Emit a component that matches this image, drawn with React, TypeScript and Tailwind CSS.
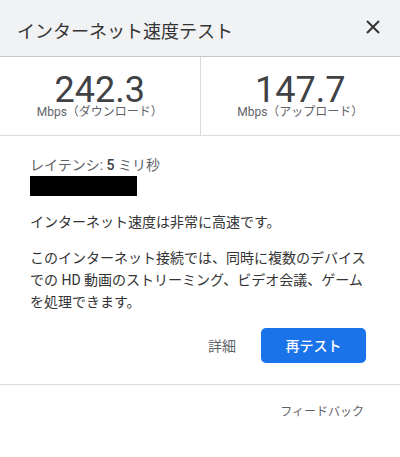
import React from "react";

const stats = [
  { value: "242.3", label: "Mbps（ダウンロード）" },
  { value: "147.7", label: "Mbps（アップロード）" },
];

const SpeedTestDialog = () => {
  return (
    <div className="w-[400px] h-[457px] bg-white font-['Roboto','Noto_Sans_CJK_JP',sans-serif] text-[#3c4043]">
      {/* HEADER */}
      <div className="h-[57px] bg-[#f1f2f4] border-b border-[#c6c7cc] flex items-center justify-between pl-[17px] pr-[20px]">
        <h1 className="pt-[8px] text-[18px] leading-[24px] text-[#333]">
          インターネット速度テスト
        </h1>
        <button className="w-[14px] h-[14px] -mt-[2px]">
          <svg width="14" height="14" viewBox="0 0 14 14">
            <path d="M1 1L13 13M13 1L1 13" stroke="#333" strokeWidth="2" />
          </svg>
        </button>
      </div>

      {/* STATS */}
      <div className="h-[79px] border-b border-[#dadce0] flex">
        {stats.map((s, i) => (
          <div
            key={i}
            className={`flex-1 flex flex-col items-center pt-[18px] ${i === 0 ? "border-r border-[#dadce0]" : ""}`}
          >
            <p className="text-[36px] leading-[30px] text-[#404246]">{s.value}</p>
            <p className="text-[12px] leading-[14px] text-[#5f6368]">{s.label}</p>
          </div>
        ))}
      </div>

      {/* RESULT */}
      <div className="px-[30px] pt-[18px] pb-[21px] border-b border-[#dadce0] text-[14px] leading-[22px]">
        <p className="text-[#5f6368]">
          レイテンシ: <span className="font-medium text-[#3c4043]">5</span> ミリ秒
        </p>
        <div className="w-[107px] h-[20px] bg-black" />
        <p className="mt-[15px] text-[#333]">インターネット速度は非常に高速です。</p>
        <p className="mt-[14px] text-[#333]">
          このインターネット接続では、同時に複数のデバイスでの HD
          動画のストリーミング、ビデオ会議、ゲームを処理できます。
        </p>
        <div className="mt-[15px] flex justify-end items-center gap-[25px] pr-[4px]">
          <button className="text-[#5f6368] text-[14px]">詳細</button>
          <button className="w-[105px] h-[35px] rounded-[5px] bg-[#1a73e8] text-white text-[14px] font-medium">
            再テスト
          </button>
        </div>
      </div>

      {/* FOOTER */}
      <div className="flex justify-end pt-[19px] pr-[36px]">
        <button className="text-[12px] leading-[16px] text-[#5f6368]">フィードバック</button>
      </div>
    </div>
  );
};

export default function App() {
  return <SpeedTestDialog />;
}
